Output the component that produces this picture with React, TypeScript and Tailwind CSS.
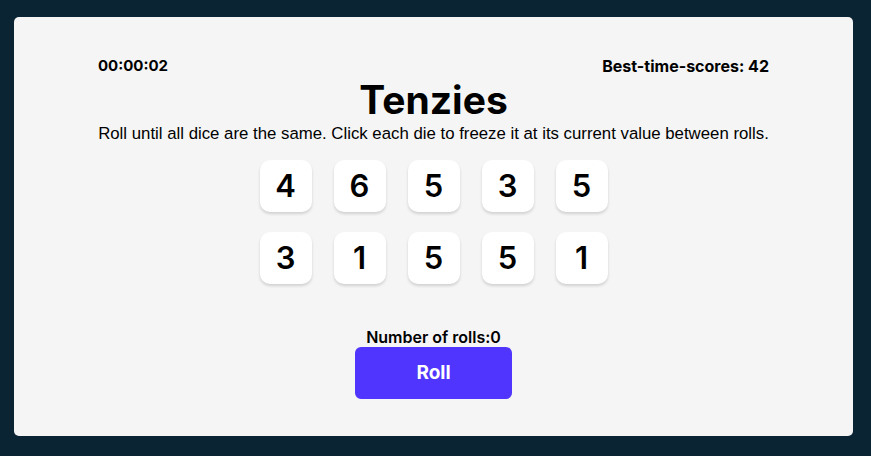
import React, { useState } from "react";

const initialDice = [4, 6, 5, 3, 5, 3, 1, 5, 5, 1];

function Die({ value }: { value: number }) {
  return (
    <div className="w-[52px] h-[52px] rounded-[10px] bg-white shadow-[0_2px_3px_rgba(0,0,0,0.15)] flex items-center justify-center text-[31px] font-semibold text-black cursor-pointer">
      {value}
    </div>
  );
}

export default function App() {
  const [dice] = useState(initialDice);
  const [rolls] = useState(0);

  return (
    <div className="min-h-screen bg-[#0B2434] pl-[14px] pr-[18px] pt-[17px] font-['Inter',sans-serif]">
      <main className="h-[419px] rounded-[5px] bg-[#F5F5F5] flex flex-col items-center px-[84px] pt-[39px]">
        <div className="w-full flex justify-between items-center leading-[20px] font-bold text-black">
          <span className="text-[15px]">00:00:02</span>
          <span className="text-[16px]">Best-time-scores: 42</span>
        </div>
        <h1 className="text-[39px] leading-[48px] font-bold text-black">
          Tenzies
        </h1>
        <p className="whitespace-nowrap text-center font-['Liberation_Sans',Arial,sans-serif] text-[16.8px] leading-[20px] text-black">
          Roll until all dice are the same. Click each die to freeze it at its
          current value between rolls.
        </p>
        <div className="mt-[16px] grid grid-cols-5 gap-x-[22px] gap-y-[20px]">
          {dice.map((d, i) => (
            <Die key={i} value={d} />
          ))}
        </div>
        <p className="mt-[43px] text-[16px] leading-[20px] font-semibold text-black">
          Number of rolls:{rolls}
        </p>
        <button className="w-[157px] h-[52px] rounded-[6px] bg-[#5035FF] text-white text-[19px] font-bold">
          Roll
        </button>
      </main>
    </div>
  );
}
